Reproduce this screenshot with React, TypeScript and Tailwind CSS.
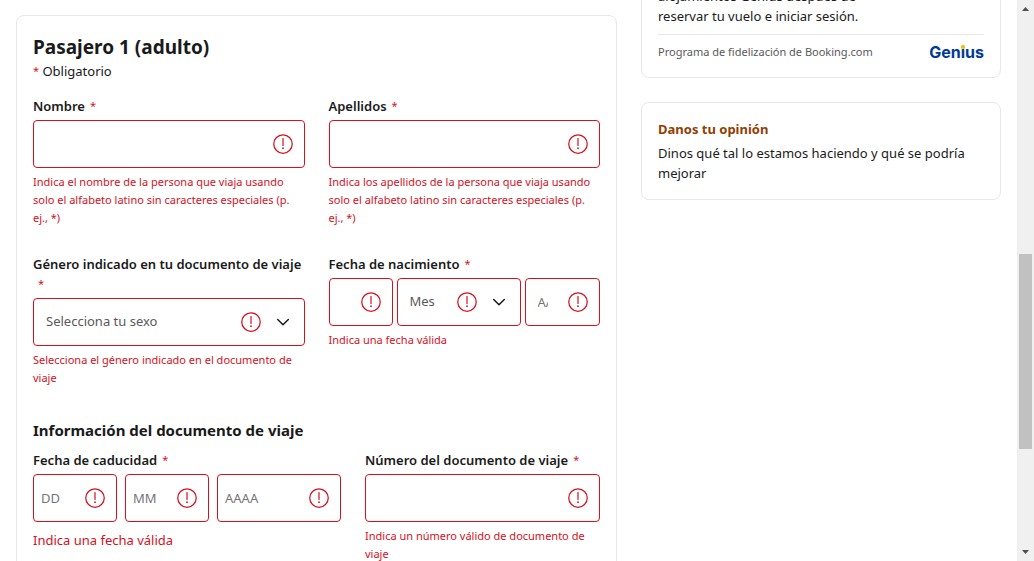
import React from "react";

function AlertIcon() {
  return (
    <svg className="size-5 shrink-0" viewBox="0 0 20 20" fill="none" stroke="#d4111e" aria-hidden="true">
      <circle cx="10" cy="10" r="9.25" strokeWidth="1.25" />
      <path d="M10 4.500v6.900" strokeWidth="1.200" strokeLinecap="round" />
      <circle cx="10" cy="14.200" r=".9" fill="#d4111e" stroke="none" />
    </svg>
  );
}

function Chevron() {
  return (
    <svg className="pointer-events-none ml-3 size-5 shrink-0" viewBox="0 0 20 20" fill="none" stroke="#1a1a1a" aria-hidden="true">
      <path d="M4.700 7.500 10 12.800l5.300-5.300" strokeWidth="1.500" strokeLinecap="round" strokeLinejoin="round" />
    </svg>
  );
}

const box = "flex h-12 items-center rounded-[4px] border border-[#d4111e] bg-white";

type FieldProps = {
  id: string;
  placeholder?: string;
  label?: string;
  className?: string;
};

function TextBox({ id, placeholder, label, className = "pr-[11px] pl-3" }: FieldProps) {
  return (
    <div className={`${box} ${className}`}>
      <input
        id={id}
        type="text"
        aria-label={label}
        aria-invalid="true"
        placeholder={placeholder}
        className="mr-5 h-full w-0 min-w-0 flex-1 bg-transparent text-[13px] outline-none placeholder:text-[#757575]"
      />
      <AlertIcon />
    </div>
  );
}

function SelectBox({ id, placeholder, label }: FieldProps) {
  return (
    <div className={`${box} pr-[11px] pl-3`}>
      <select
        id={id}
        aria-label={label}
        aria-invalid="true"
        className="h-full w-0 min-w-0 flex-1 appearance-none bg-transparent text-[13px] text-[#595959] outline-none"
      >
        <option>{placeholder}</option>
      </select>
      <AlertIcon />
      <Chevron />
    </div>
  );
}

function Label({ htmlFor, children }: { htmlFor: string; children: React.ReactNode }) {
  return (
    <label htmlFor={htmlFor} className="mb-1 block text-[13px] leading-5 font-semibold">
      {children}
      <span className="ml-[5px] inline-block align-top text-[11px] font-normal text-[#d4111e]">*</span>
    </label>
  );
}

function ErrorText({ children }: { children: React.ReactNode }) {
  return <p className="mt-[5px] text-[11px] leading-[18px] text-[#d4111e]">{children}</p>;
}

function PassengerForm() {
  return (
    <form className="mt-[15px] min-w-0 flex-1 rounded-lg border border-[#e7e7e7] px-4 pt-[17px] pb-6">
      <h2 className="text-[19px] leading-7 font-bold">Pasajero 1 (adulto)</h2>
      <p className="text-[13px] leading-5">
        <span className="align-top text-[11px] text-[#d4111e]">*</span> Obligatorio
      </p>

      <div className="mt-[15px] grid grid-cols-2 gap-x-6 gap-y-[27px]">
        <div>
          <Label htmlFor="nombre">Nombre</Label>
          <TextBox id="nombre" />
          <ErrorText>
            Indica el nombre de la persona que viaja usando solo el alfabeto latino sin caracteres especiales (p. ej., *)
          </ErrorText>
        </div>
        <div>
          <Label htmlFor="apellidos">Apellidos</Label>
          <TextBox id="apellidos" />
          <ErrorText>
            Indica los apellidos de la persona que viaja usando solo el alfabeto latino sin caracteres especiales (p. ej., *)
          </ErrorText>
        </div>
        <div>
          <Label htmlFor="genero">Género indicado en tu documento de viaje</Label>
          <SelectBox id="genero" placeholder="Selecciona tu sexo" />
          <ErrorText>Selecciona el género indicado en el documento de viaje</ErrorText>
        </div>
        <div>
          <Label htmlFor="nacimiento-dia">Fecha de nacimiento</Label>
          <div className="grid grid-cols-[64px_124px_minmax(0,1fr)] gap-1">
            <TextBox id="nacimiento-dia" className="pr-[11px] pl-[7px]" />
            <SelectBox id="nacimiento-mes" placeholder="Mes" label="Mes" />
            <TextBox id="nacimiento-anio" placeholder="AAAA" label="Año" />
          </div>
          <ErrorText>Indica una fecha válida</ErrorText>
        </div>
      </div>

      <h3 className="mt-[31px] mb-2 text-[15px] leading-6 font-bold">Información del documento de viaje</h3>
      <div className="grid grid-cols-[308px_minmax(0,1fr)] gap-6">
        <div>
          <Label htmlFor="caducidad-dia">Fecha de caducidad</Label>
          <div className="grid grid-cols-[84px_84px_minmax(0,1fr)] gap-2">
            <TextBox id="caducidad-dia" placeholder="DD" className="pr-[11px] pl-[7px]" />
            <TextBox id="caducidad-mes" placeholder="MM" label="Mes de caducidad" className="pr-[11px] pl-[7px]" />
            <TextBox id="caducidad-anio" placeholder="AAAA" label="Año de caducidad" className="pr-[11px] pl-[7px]" />
          </div>
          <p className="mt-2 text-[13px] leading-5 text-[#d4111e]">Indica una fecha válida</p>
        </div>
        <div>
          <Label htmlFor="documento">Número del documento de viaje</Label>
          <TextBox id="documento" />
          <ErrorText>Indica un número válido de documento de viaje</ErrorText>
        </div>
      </div>
    </form>
  );
}

function GeniusLogo() {
  return (
    <span className="font-['Inter'] text-base leading-[18px] font-bold text-[#003b95]">
      Gen
      <span className="relative">
        i<span className="absolute top-[3px] left-0 size-1 rounded-full bg-[#febb02]" />
      </span>
      us
    </span>
  );
}

function Sidebar() {
  return (
    <aside className="-mt-[31px] flex w-[360px] shrink-0 flex-col gap-6">
      <section className="rounded-lg border border-[#e7e7e7] p-4">
        <p className="text-[13px] leading-5">
          alojamientos Genius después de
          <br />
          reservar tu vuelo e iniciar sesión.
        </p>
        <div className="mt-2 flex items-center justify-between border-t border-[#e7e7e7] pt-2">
          <span className="text-[11px] leading-[18px] text-[#595959]">Programa de fidelización de Booking.com</span>
          <GeniusLogo />
        </div>
      </section>
      <section className="rounded-lg border border-[#e7e7e7] p-4">
        <h2 className="mb-1 text-[13px] leading-5 font-bold text-[#923e01]">Danos tu opinión</h2>
        <p className="text-[13px] leading-5">Dinos qué tal lo estamos haciendo y qué se podría mejorar</p>
      </section>
    </aside>
  );
}

function ScrollTrack() {
  return (
    <div className="flex w-[17px] shrink-0 flex-col items-center bg-[#f0f0f0]" aria-hidden="true">
      <svg className="h-[17px] w-[17px] shrink-0" viewBox="0 0 17 17" fill="#505050">
        <path d="M5 11h7L8.500 7z" />
      </svg>
      <div className="grow-[237]" />
      <div className="w-[13px] grow-[195] bg-[#c1c1c1]" />
      <div className="grow-[95]" />
      <svg className="h-[17px] w-[17px] shrink-0" viewBox="0 0 17 17" fill="#505050">
        <path d="M5 6h7l-3.500 4z" />
      </svg>
    </div>
  );
}

export default function App() {
  return (
    <div className="flex h-screen overflow-hidden bg-white font-['Noto_Sans',sans-serif] text-[#1a1a1a]">
      <main className="flex min-w-0 flex-1 items-start gap-6 overflow-hidden px-4">
        <PassengerForm />
        <Sidebar />
      </main>
      <ScrollTrack />
    </div>
  );
}
